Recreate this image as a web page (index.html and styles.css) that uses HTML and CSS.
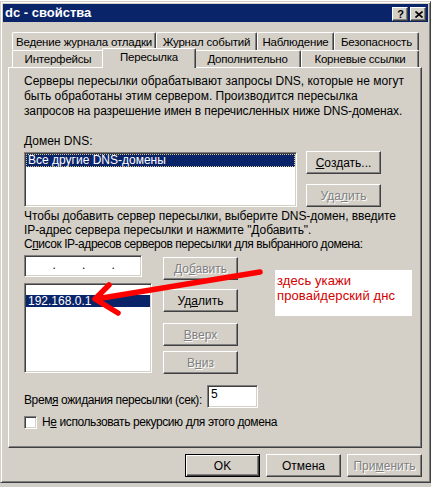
FILE: index.html
```html
<!DOCTYPE html>
<html lang="ru">
<head>
<meta charset="utf-8">
<title>dc - свойства</title>
<link rel="stylesheet" href="styles.css">
</head>
<body>
<div class="window">
  <div class="titlebar">
    <span class="title">dc - свойства</span>
    <div class="caption-buttons">
      <span class="cap-btn help">?</span>
      <span class="cap-btn close">
        <svg width="8" height="7" viewBox="0 0 8 7"><path d="M0.5 0.5 L7.5 6.5 M7.5 0.5 L0.5 6.5" stroke="#000" stroke-width="1.6" fill="none"/></svg>
      </span>
    </div>
  </div>
  <div class="client">
    <div class="tabs">
      <div class="tab-row back">
        <div class="tab t1">Ведение журнала отладки</div>
        <div class="tab t2">Журнал событий</div>
        <div class="tab t3">Наблюдение</div>
        <div class="tab t4">Безопасность</div>
      </div>
      <div class="tab-row front">
        <div class="tab t5">Интерфейсы</div>
        <div class="tab t6 selected">Пересылка</div>
        <div class="tab t7">Дополнительно</div>
        <div class="tab t8">Корневые ссылки</div>
      </div>
    </div>
    <div class="panel">
      <p class="intro">Серверы пересылки обрабатывают запросы DNS, которые не могут<br>быть обработаны этим сервером. Производится пересылка<br><span class="tight">запросов на разрешение имен в перечисленных ниже DNS-доменах.</span></p>
      <div class="label-dns"><u>Д</u>омен DNS:</div>
      <div class="domain-row">
        <div class="listbox domains">
          <div class="item selected focus">Все другие DNS-домены</div>
        </div>
        <div class="btn-col">
          <div class="btn"><span><u>С</u>оздать...</span></div>
          <div class="btn disabled gap10"><span>Уда<u>л</u>ить</span></div>
        </div>
      </div>
      <p class="help-text">Чтобы добавить сервер пересылки, выберите DNS-домен, введите<br>IP-адрес сервера пересылки и нажмите "Добавить".</p>
      <div class="label-list">С<u>п</u>исок IP-адресов серверов пересылки для выбранного домена:</div>
      <div class="ip-row">
        <div class="ip-col">
          <div class="field ipfield">
            <span class="seg"></span><span class="dot">.</span>
            <span class="seg"></span><span class="dot">.</span>
            <span class="seg"></span><span class="dot">.</span>
            <span class="seg"></span>
          </div>
          <div class="listbox servers">
            <div class="item selected">192.168.0.1</div>
          </div>
        </div>
        <div class="btn-col ip-btns">
          <div class="btn disabled"><span>До<u>б</u>авить</span></div>
          <div class="btn gap9"><span>Уд<u>а</u>лить</span></div>
          <div class="btn disabled gap11"><span><u>В</u>верх</span></div>
          <div class="btn disabled gap5"><span>В<u>н</u>из</span></div>
        </div>
      </div>
      <div class="timeout-row">
        <div class="timeout-label">Врем<u>я</u> ожидания пересылки (сек):</div>
        <div class="field timeout">5</div>
      </div>
      <div class="check-row">
        <span class="checkbox"></span>
        <span class="check-label">Н<u>е</u> использовать рекурсию для этого домена</span>
      </div>
    </div>
    <div class="dialog-buttons">
      <div class="btn default"><span>OK</span></div>
      <div class="btn"><span>Отмена</span></div>
      <div class="btn disabled"><span>При<u>м</u>енить</span></div>
    </div>
  </div>
</div>

<div class="note">здесь укажи<br>провайдерский днс</div>
<svg class="arrow" width="431" height="487" viewBox="0 0 431 487">
  <g stroke="#f00" stroke-width="5.5" stroke-linecap="round" stroke-linejoin="round" fill="none">
    <path d="M260 272 L96 299"/>
    <path d="M109 285 L95 299 L118 313"/>
  </g>
</svg>
</body>
</html>
```

FILE: styles.css
```css
html, body {
  margin: 0;
  padding: 0;
}
body {
  position: relative;
  width: 431px;
  height: 487px;
  overflow: hidden;
  background: linear-gradient(to bottom, #ffffff 0, #ffffff 10px, #d0cec8 10px);
  font-family: "Liberation Sans", Arial, sans-serif;
  font-size: 12px;
  color: #000;
}
u { text-decoration: underline; text-underline-offset: 1px; }

.window {
  box-sizing: border-box;
  width: 431px;
  height: 482px;
  margin-top: 1px;
  padding: 2px;
  background: #d4d0c8;
  border: 1px solid;
  border-color: #d4d0c8 #404040 #404040 #d4d0c8;
  box-shadow: inset 1px 1px #ffffff, inset -1px -1px #808080;
}

.titlebar {
  height: 18px;
  background: #0a246a;
  display: flex;
  align-items: flex-start;
  justify-content: space-between;
  padding: 0 2px 0 2px;
}
.title {
  color: #fff;
  font-weight: bold;
  font-size: 13px;
  line-height: 18px;
}
.caption-buttons {
  display: flex;
  gap: 2px;
  padding-top: 3px;
}
.cap-btn {
  box-sizing: border-box;
  width: 16px;
  height: 14px;
  background: #d4d0c8;
  border: 1px solid;
  border-color: #ffffff #404040 #404040 #ffffff;
  box-shadow: inset -1px -1px #808080;
  display: flex;
  align-items: center;
  justify-content: center;
}
.cap-btn.help {
  font-weight: bold;
  font-size: 11px;
  line-height: 12px;
  padding-left: 1px;
}
.cap-btn.close svg { display: block; margin-left: 1px; }

.client {
  padding: 10px 0 0 5px;
}

.tabs {
  width: 414px;
}
.tab-row {
  display: flex;
  padding-left: 4px;
}
.tab {
  box-sizing: border-box;
  background: #d4d0c8;
  border-left: 1px solid #ffffff;
  border-top: 1px solid #ffffff;
  border-right: 1px solid #404040;
  box-shadow: inset -1px 0 #808080;
  border-radius: 2px 2px 0 0;
  text-align: center;
  white-space: nowrap;
  font-size: 11.5px;
  letter-spacing: -0.2px;
}
.back .tab {
  height: 18px;
  line-height: 16px;
  padding-top: 1px;
}
.front .tab {
  height: 17px;
  line-height: 15px;
  padding-top: 1px;
}
.t1 { width: 144px; }
.t2 { width: 101px; }
.t3 { width: 77px; }
.t4 { width: 85px; }
.t5 { width: 92px; }
.t6 { width: 90px; }
.t7 { width: 107px; }
.t8 { width: 118px; }
.front .tab.selected {
  position: relative;
  z-index: 2;
  width: 94px;
  height: 20px;
  margin: -2px -2px -1px -2px;
  padding-top: 1px;
}

.panel {
  box-sizing: border-box;
  width: 414px;
  height: 381px;
  border-top: 1px solid #ffffff;
  border-left: 1px solid #ffffff;
  border-right: 1px solid #404040;
  border-bottom: 1px solid #404040;
  box-shadow: inset -1px -1px #808080;
  padding: 6px 0 0 15px;
}

.intro {
  margin: 0;
  line-height: 15px;
  white-space: nowrap;
}
.tight { letter-spacing: -0.13px; }
.label-dns {
  margin-top: 15px;
  line-height: 15px;
}
.domain-row {
  display: flex;
  margin-top: 2px;
}

.listbox, .field, .checkbox {
  box-sizing: border-box;
  background: #fff;
  border: 1px solid;
  border-color: #808080 #ffffff #ffffff #808080;
  box-shadow: inset 1px 1px #404040, inset -1px -1px #d4d0c8;
}
.listbox { padding: 1px; }
.domains {
  width: 273px;
  height: 55px;
  margin-top: 1px;
}
.item {
  height: 13px;
  line-height: 13px;
  padding-left: 2px;
  white-space: nowrap;
}
.item.selected {
  background: #0a246a;
  color: #fff;
}
.item.focus {
  outline: 1px dotted #d8c890;
  outline-offset: -1px;
}

.btn-col {
  display: flex;
  flex-direction: column;
  margin-left: 9px;
}
.btn {
  box-sizing: border-box;
  width: 75px;
  height: 23px;
  background: #d4d0c8;
  border: 1px solid;
  border-color: #ffffff #404040 #404040 #ffffff;
  box-shadow: inset -1px -1px #808080;
  display: flex;
  align-items: center;
  justify-content: center;
  white-space: nowrap;
}
.btn.disabled {
  color: #808080;
  text-shadow: 1px 1px 0 #ffffff;
}
.btn.default {
  border-color: #000;
  box-shadow: inset 1px 1px #ffffff, inset -1px -1px #404040, inset -2px -2px #808080;
}
.gap10 { margin-top: 10px; }
.gap9 { margin-top: 9px; }
.gap11 { margin-top: 11px; }
.gap5 { margin-top: 5px; }

.help-text {
  margin: 2px 0 0 0;
  line-height: 14px;
  white-space: nowrap;
  letter-spacing: -0.07px;
}
.label-list {
  line-height: 14px;
  white-space: nowrap;
  letter-spacing: -0.45px;
}

.ip-row {
  display: flex;
  margin-top: 4px;
}
.ip-col {
  width: 128px;
  display: flex;
  flex-direction: column;
}
.ipfield {
  width: 118px;
  height: 22px;
  display: flex;
  align-items: center;
  padding-left: 1px;
}
.seg { width: 27px; }
.dot {
  width: 3px;
  text-align: center;
  line-height: 12px;
  margin-top: -2px;
}
.servers {
  width: 128px;
  height: 90px;
  margin-top: 6px;
  padding-top: 11px;
}
.servers .item {
  height: 12px;
  line-height: 12px;
}
.ip-btns {
  margin-left: 11px;
  padding-top: 2px;
}

.timeout-row {
  display: flex;
  margin-top: 11px;
}
.timeout-label {
  width: 183px;
  line-height: 14px;
  padding-top: 8px;
  white-space: nowrap;
  letter-spacing: -0.4px;
}
.timeout {
  width: 51px;
  height: 23px;
  padding: 1px 0 0 3px;
  line-height: 14px;
}

.check-row {
  display: flex;
  align-items: center;
  margin-top: 7px;
}
.checkbox {
  width: 13px;
  height: 13px;
}
.check-label {
  margin-left: 5px;
  line-height: 14px;
  white-space: nowrap;
  letter-spacing: -0.4px;
}

.dialog-buttons {
  width: 414px;
  display: flex;
  justify-content: flex-end;
  gap: 6px;
  margin-top: 6px;
}

.note {
  position: absolute;
  left: 275px;
  top: 270px;
  width: 137px;
  height: 46px;
  box-sizing: border-box;
  background: #fff;
  color: #d40000;
  font-size: 13px;
  line-height: 15px;
  padding: 3px 0 0 2px;
  letter-spacing: 0.1px;
  white-space: nowrap;
}
.arrow {
  position: absolute;
  left: 0;
  top: 0;
  pointer-events: none;
}
```
